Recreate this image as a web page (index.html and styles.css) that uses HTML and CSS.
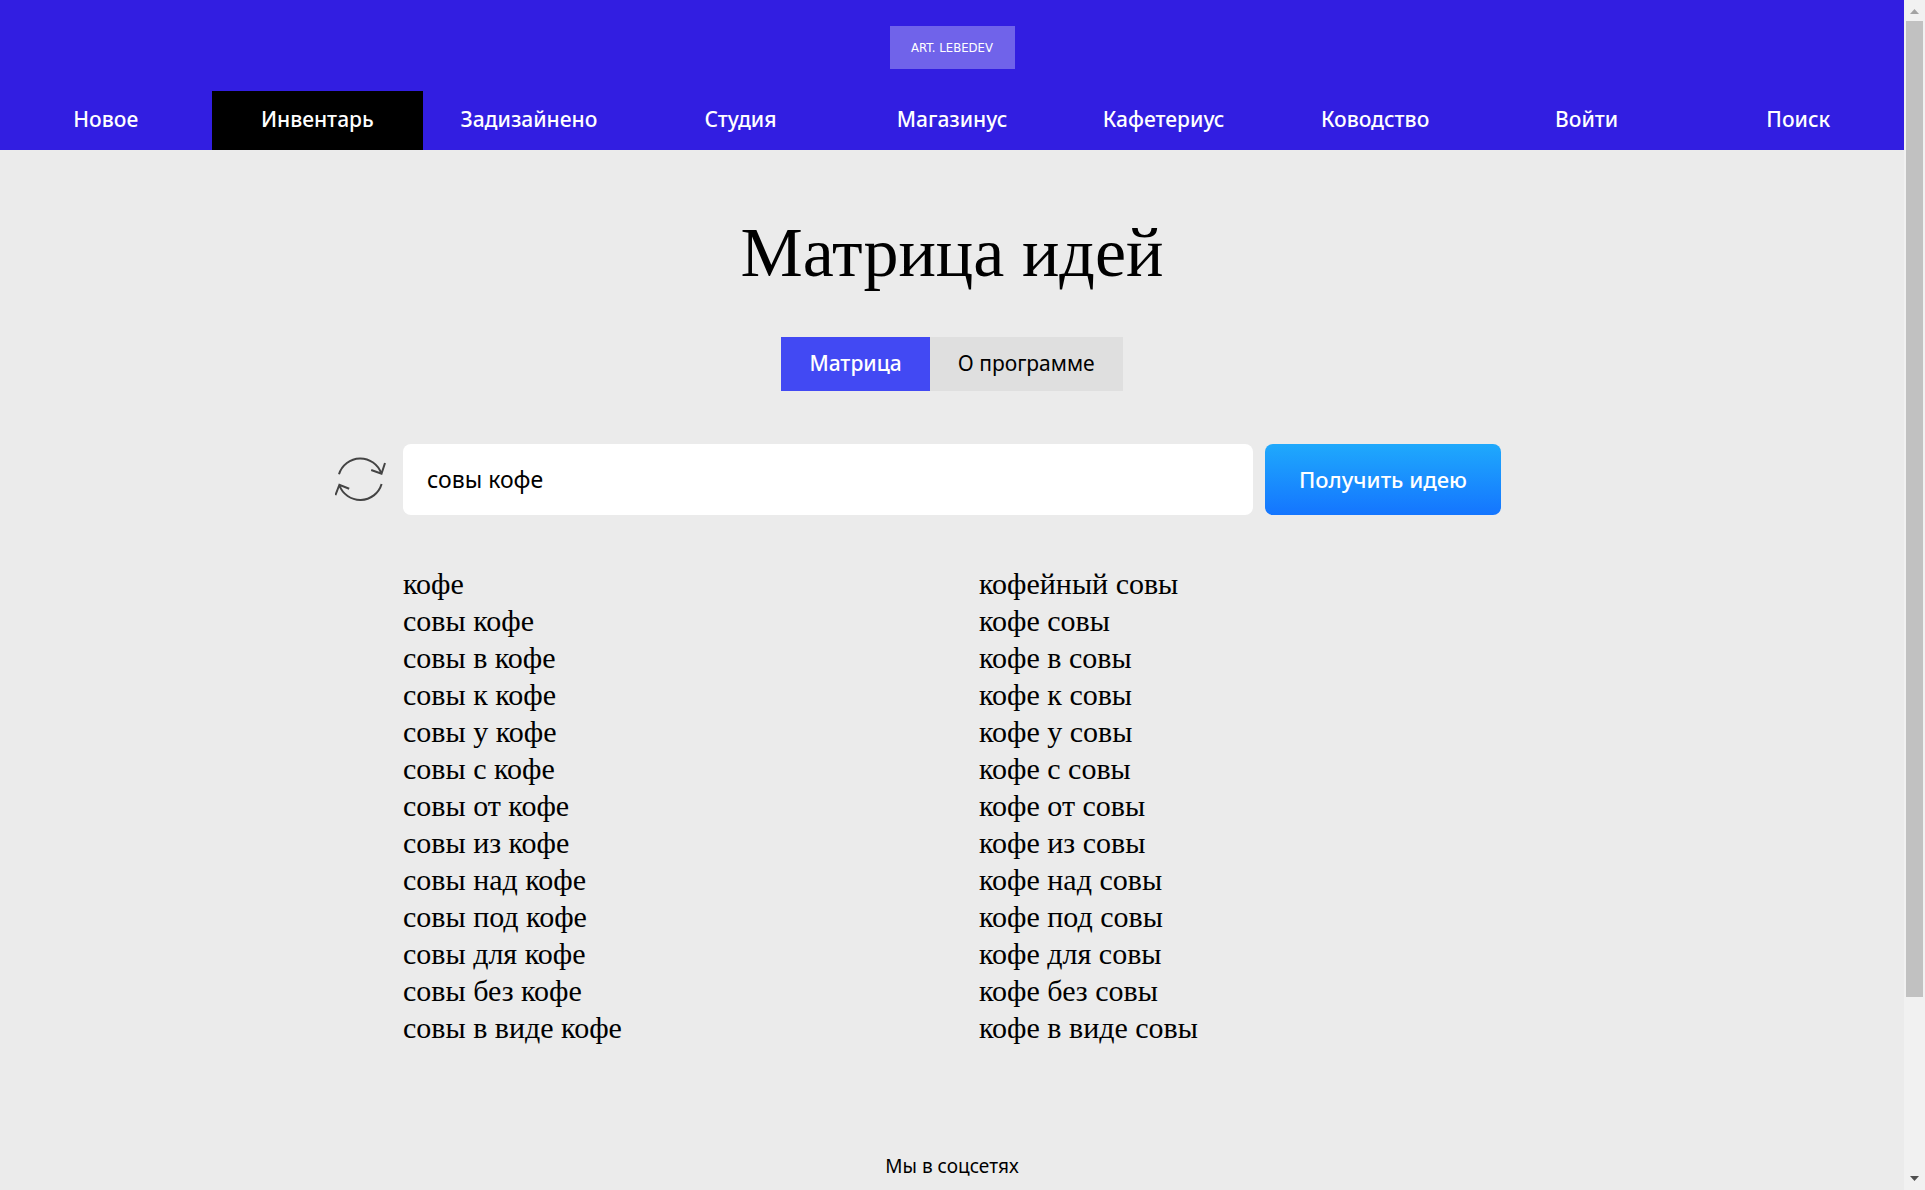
FILE: index.html
```html
<!DOCTYPE html>
<html lang="ru">
<head>
<meta charset="utf-8">
<meta name="viewport" content="width=device-width, initial-scale=1">
<title>Матрица идей</title>
<link rel="stylesheet" href="styles.css">
</head>
<body>
<div class="page">
  <header class="header">
    <a class="logo" href="#">ART. LEBEDEV</a>
    <nav class="nav">
      <a href="#">Новое</a>
      <a href="#" class="nav-active">Инвентарь</a>
      <a href="#">Задизайнено</a>
      <a href="#">Студия</a>
      <a href="#">Магазинус</a>
      <a href="#">Кафетериус</a>
      <a href="#">Ководство</a>
      <a href="#">Войти</a>
      <a href="#">Поиск</a>
    </nav>
  </header>
  <main class="main">
    <h1 class="title">Матрица идей</h1>
    <nav class="tabs">
      <a href="#" class="tab tab-active">Матрица</a>
      <a href="#" class="tab">О программе</a>
    </nav>
    <form class="form">
      <button class="refresh" type="button" aria-label="Обновить">
        <svg class="refresh-icon" viewBox="15 25 51 48" aria-hidden="true">
          <path d="M19 44.3A22.2 22.2 0 0 1 61.3 43.6M51.2 40l10.3 3.7L65 33M61.6 54A22.2 22.2 0 0 1 19.3 55M15.4 65.2l4-10.5L29.2 58.7"/>
        </svg>
      </button>
      <input class="query" type="text" value="совы кофе" aria-label="Слова для идеи">
      <button class="submit" type="submit">Получить идею</button>
    </form>
    <div class="ideas">
      <ul class="list">
        <li>кофе</li>
        <li>совы кофе</li>
        <li>совы в кофе</li>
        <li>совы к кофе</li>
        <li>совы у кофе</li>
        <li>совы с кофе</li>
        <li>совы от кофе</li>
        <li>совы из кофе</li>
        <li>совы над кофе</li>
        <li>совы под кофе</li>
        <li>совы для кофе</li>
        <li>совы без кофе</li>
        <li>совы в виде кофе</li>
      </ul>
      <ul class="list">
        <li>кофейный совы</li>
        <li>кофе совы</li>
        <li>кофе в совы</li>
        <li>кофе к совы</li>
        <li>кофе у совы</li>
        <li>кофе с совы</li>
        <li>кофе от совы</li>
        <li>кофе из совы</li>
        <li>кофе над совы</li>
        <li>кофе под совы</li>
        <li>кофе для совы</li>
        <li>кофе без совы</li>
        <li>кофе в виде совы</li>
      </ul>
    </div>
  </main>
  <footer class="footer">Мы в соцсетях</footer>
</div>
<div class="scrollbar" aria-hidden="true">
  <svg class="arrow" viewBox="0 0 21 21"><path fill="#a3a3a3" d="M6 14L10.5 9L15 14z"/></svg>
  <div class="track"><div class="thumb"></div></div>
  <svg class="arrow" viewBox="0 0 21 21"><path fill="#505050" d="M6 7L10.5 12L15 7z"/></svg>
</div>
</body>
</html>
```
FILE: styles.css
```css
* {
  box-sizing: border-box;
}

body {
  margin: 0;
  display: grid;
  grid-template-columns: 1fr 21px;
  min-height: 100vh;
  background: #ebebeb;
  color: #000;
  font-family: "Noto Sans", "Open Sans", sans-serif;
  font-size: 21px;
}

a {
  color: inherit;
  text-decoration: none;
}

.header {
  display: flex;
  flex-direction: column;
  align-items: center;
  gap: 22px;
  padding-top: 26px;
  background: #321ee1;
  color: #fff;
}

.logo {
  width: 125px;
  background: #7063ea;
  font-family: "DejaVu Sans Condensed", "Liberation Sans", sans-serif;
  font-size: 13px;
  line-height: 43px;
  text-align: center;
}

.nav {
  display: grid;
  grid-template-columns: repeat(9, 1fr);
  width: 100%;
  font-weight: 500;
  line-height: 57px;
  text-align: center;
}

.nav a {
  padding-bottom: 2px;
}

.nav-active {
  background: #000;
}

.main {
  display: flex;
  flex-direction: column;
  align-items: center;
  padding-top: 63px;
}

.title {
  margin: 0 0 44px;
  font: 400 70px/80px "Liberation Serif", serif;
}

.tabs {
  display: flex;
  margin-bottom: 53px;
  line-height: 52px;
}

.tab {
  padding: 0 28px 2px;
  background: #dfdfdf;
}

.tab-active {
  background: #4249f3;
  color: #fff;
  font-weight: 500;
}

.form {
  display: grid;
  grid-template-columns: 71px 1fr 236px 71px;
  width: 100%;
  max-width: 1240px;
  margin-bottom: 50px;
}

.refresh {
  padding: 0 14px 2px 0;
  border: 0;
  background: none;
  cursor: pointer;
}

.refresh-icon {
  display: block;
  width: 51px;
  height: 48px;
  margin: 0 auto;
  fill: none;
  stroke: #444;
  stroke-width: 2;
}

.query {
  min-width: 0;
  height: 71px;
  margin-right: 12px;
  padding: 0 24px 2px;
  border: 0;
  border-radius: 8px;
  background: #fff;
  color: #000;
  font: 23px "Noto Sans", sans-serif;
}

.submit {
  padding: 0 0 2px;
  border: 0;
  border-radius: 8px;
  background: linear-gradient(#1fa9fc, #1475ff);
  color: #fff;
  font: 500 22px "Noto Sans", sans-serif;
  cursor: pointer;
}

.ideas {
  display: grid;
  grid-template-columns: 1fr 1fr;
  gap: 54px;
  width: 100%;
  max-width: 1240px;
  padding: 0 71px;
  font: 30px/37px "Liberation Serif", serif;
}

.list {
  margin: 0;
  padding: 0;
  list-style: none;
}

.footer {
  padding-top: 106px;
  font-size: 19px;
  line-height: 28px;
  text-align: center;
}

.scrollbar {
  position: sticky;
  top: 0;
  display: flex;
  flex-direction: column;
  height: 100vh;
  background: #f1f1f1;
}

.arrow {
  display: block;
  width: 21px;
  height: 21px;
}

.track {
  flex: 1;
  padding: 0 2px;
}

.thumb {
  height: 85%;
  background: #c1c1c1;
}
```
